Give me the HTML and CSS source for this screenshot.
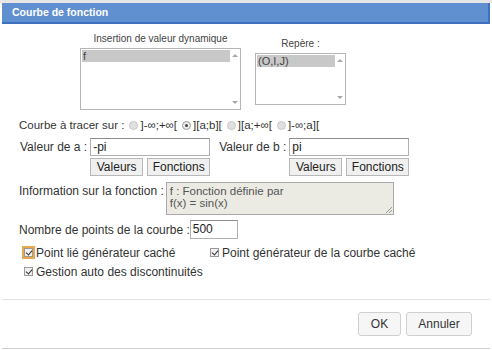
FILE: index.html
```html
<!DOCTYPE html>
<html>
<head>
<meta charset="utf-8">
<link rel="stylesheet" href="styles.css">
</head>
<body>
<div class="topstrip"></div>
<div class="dialog">
  <div class="titlebar">Courbe de fonction</div>
  <div class="content">
    <div class="lists">
      <div class="listcol">
        <div class="smalllabel">Insertion de valeur dynamique</div>
        <div class="listbox lb1">
          <div class="items"><div class="item sel">f</div></div>
          <div class="sbar"><span class="up"></span><span class="down"></span></div>
        </div>
      </div>
      <div class="listcol">
        <div class="smalllabel">Repère :</div>
        <div class="listbox lb2">
          <div class="items"><div class="item sel">(O,I,J)</div></div>
          <div class="sbar"><span class="up"></span><span class="down"></span></div>
        </div>
      </div>
    </div>

    <div class="row courbe">
      <span class="ct">Courbe à tracer sur :</span>
      <span class="radio"></span><span class="ct">]-∞;+∞[</span>
      <span class="radio on"></span><span class="ct">][a;b][</span>
      <span class="radio"></span><span class="ct">][a;+∞[</span>
      <span class="radio"></span><span class="ct">]-∞;a][</span>
    </div>

    <div class="bounds">
      <div class="bound">
        <div class="brow"><span class="blabel">Valeur de a :</span><div class="tinput wide">-pi</div></div>
        <div class="btns"><span class="btn bv">Valeurs</span><span class="btn bf">Fonctions</span></div>
      </div>
      <div class="bound">
        <div class="brow"><span class="blabel">Valeur de b :</span><div class="tinput wide">pi</div></div>
        <div class="btns"><span class="btn bv">Valeurs</span><span class="btn bf">Fonctions</span></div>
      </div>
    </div>

    <div class="row info">
      <span class="ilabel">Information sur la fonction :</span>
      <div class="tarea">f : Fonction définie par<br>f(x) = sin(x)<span class="grip"></span></div>
    </div>

    <div class="row nb">
      <span>Nombre de points de la courbe :</span>
      <div class="tinput small">500</div>
    </div>

    <div class="checks">
      <div class="crow">
        <label class="chk c1"><span class="box focus"></span>Point lié générateur caché</label>
        <label class="chk c2"><span class="box"></span>Point générateur de la courbe caché</label>
      </div>
      <div class="crow">
        <label class="chk c1"><span class="box"></span>Gestion auto des discontinuités</label>
      </div>
    </div>
  </div>
  <div class="footer">
    <span class="fbtn ok">OK</span>
    <span class="fbtn cancel">Annuler</span>
  </div>
</div>
</body>
</html>
```

FILE: styles.css
```css
* { box-sizing: border-box; }
html, body { margin: 0; padding: 0; background: #fff; }
body {
  font-family: "Liberation Sans", Arial, sans-serif;
  font-size: 12px;
  color: #333;
  width: 492px;
  height: 350px;
  overflow: hidden;
}
.topstrip { height: 3px; background: #e6e6e6; }
.dialog {
  margin-left: 2px;
  width: 488px;
  height: 346px;
  border-bottom: 1px solid #d0d0d0;
  display: flex;
  flex-direction: column;
}
.titlebar {
  height: 21px;
  background: #6190d0;
  border-bottom: 2px solid #3f6fbf;
  border-right: 2px solid #3f6fbf;
  color: #fff;
  font-weight: bold;
  font-size: 10.5px;
  padding-left: 10px;
  line-height: 19px;
}
.content { flex: 1; padding-top: 9px; }
.lists {
  display: flex;
  align-items: center;
  gap: 14px;
  padding-left: 78px;
}
.listcol { display: flex; flex-direction: column; align-items: center; }
.smalllabel { font-size: 10px; color: #444; margin-bottom: 3px; line-height: 12px; }
.listbox {
  border: 1px solid #b5b5b5;
  display: flex;
  background: #fff;
}
.lb1 { width: 161px; height: 62px; }
.lb2 { width: 91px; height: 52px; }
.items { flex: 1; padding: 1px 0 0 1px; }
.item { font-size: 11px; line-height: 12px; padding-left: 1px; color: #444; }
.item.sel { background: #c8c8c8; }
.sbar {
  width: 10px;
  display: flex;
  flex-direction: column;
  justify-content: space-between;
  align-items: center;
  padding: 5px 0 5px;
}
.up, .down { width: 0; height: 0; border-left: 3px solid transparent; border-right: 3px solid transparent; }
.up { border-bottom: 3px solid #a8a8a8; }
.down { border-top: 3px solid #a8a8a8; }

.row { display: flex; align-items: center; padding-left: 17px; }
.courbe { margin-top: 8px; height: 14px; gap: 2px; font-size: 11.5px; }
.ct { margin-right: 1px; }
.radio {
  width: 9px; height: 9px; border-radius: 50%;
  background: #e0e0e0; border: 1px solid #c8c8c8;
  position: relative; margin-left: 2px;
}
.radio.on { border-color: #999; background: #eee; }
.radio.on::after {
  content: ""; position: absolute; left: 2px; top: 2px;
  width: 3px; height: 3px; border-radius: 50%; background: #444;
}

.bounds { display: flex; padding-left: 18px; margin-top: 6px; gap: 9px; }
.bound { display: flex; flex-direction: column; align-items: flex-end; }
.brow { display: flex; align-items: center; gap: 3px; }
.tinput {
  height: 18px; border: 1px solid #b0b0b0; border-top-color: #8c8c8c;
  background: #fff; padding-left: 2px; line-height: 16px; font-size: 12px; color: #222;
}
.tinput.wide { width: 120px; }
.tinput.small { width: 48px; height: 19px; }
.btns { display: flex; gap: 4px; margin-top: 2px; }
.btn {
  height: 18px; border: 1px solid #b8b8b8; background: #f0f0f0;
  line-height: 16px; font-size: 12px; color: #222; text-align: center;
}
.bv { width: 53px; }
.bf { width: 63px; }
.info { margin-top: 6px; align-items: flex-start; }
.ilabel { margin-top: 2px; }
.tarea {
  margin-left: 2px; width: 228px; height: 33px; background: #ebebe4;
  border: 1px solid #aaa; padding: 2px 3px; line-height: 12px; font-size: 11.5px; color: #555;
  position: relative;
}
.grip {
  position: absolute; right: 1px; bottom: 1px; width: 6px; height: 6px;
  background: linear-gradient(135deg, transparent 45%, #999 46%, #999 54%, transparent 55%, transparent 70%, #999 71%, #999 79%, transparent 80%);
}
.nb { margin-top: 5px; }
.checks { margin-top: 4px; padding-left: 22px; }
.crow { display: flex; height: 19px; align-items: center; }
.chk { display: flex; align-items: center; }
.c1 { width: 186px; }
.box {
  width: 9px; height: 9px; border: 1px solid #999; background: #f0f0f0;
  margin-right: 3px; position: relative;
}
.box::after {
  content: ""; position: absolute; left: 2px; top: 0px; width: 3px; height: 5px;
  border-right: 1.5px solid #333; border-bottom: 1.5px solid #333; transform: rotate(40deg);
}
.box.focus { outline: 2px solid #e8a850; outline-offset: 0; }

.footer {
  border-top: 1px solid #e2e2e2;
  height: 49px;
  display: flex;
  justify-content: flex-end;
  align-items: center;
  gap: 5px;
  padding-right: 18px;
}
.fbtn {
  height: 24px; border: 1px solid #cfcfcf; border-radius: 3px; background: #f6f6f6;
  line-height: 22px; font-size: 12px; color: #333; text-align: center;
}
.fbtn.ok { width: 43px; }
.fbtn.cancel { width: 66px; }
```
